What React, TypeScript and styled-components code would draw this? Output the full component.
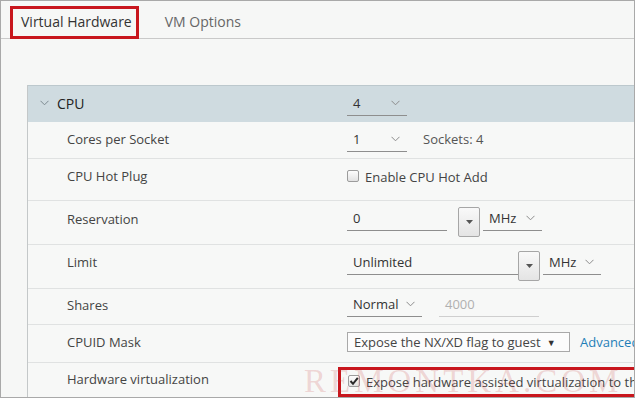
import React from 'react';
import styled, { createGlobalStyle } from 'styled-components';

const GlobalStyle = createGlobalStyle`
  body {
    margin: 0;
    font-family: 'Open Sans', 'Liberation Sans', sans-serif;
    background: #ffffff;
  }
`;

const Frame = styled.div`
  position: relative;
  box-sizing: border-box;
  width: 635px;
  height: 398px;
  overflow: hidden;
  border: 1px solid #a9a9a9;
  background: #f6f7f6;
`;

const TabBar = styled.div`
  display: flex;
  height: 37px;
  padding-left: 20px;
  border-bottom: 1px solid #c9c9c9;
`;

const Tab = styled.div<{ $active?: boolean; $marked?: boolean }>`
  position: relative;
  display: flex;
  align-items: center;
  padding: 4px 0 0;
  margin-right: 33px;
  font-size: 14px;
  color: ${(p) => (p.$active ? '#333333' : '#666666')};
  box-shadow: ${(p) => (p.$active ? 'inset 0 -2px 0 #2f5f9e' : 'none')};

  ${(p) =>
    p.$marked &&
    `
    &::after {
      content: '';
      position: absolute;
      left: -11px;
      right: -7px;
      top: 5px;
      bottom: -1px;
      border: 3px solid #c8161d;
    }
  `}
`;

const Panel = styled.div`
  margin: 46px 0 0 26px;
  width: 700px;
  border-left: 1px solid #c4c8c9;
`;

const Row = styled.div<{ $h: number; $header?: boolean }>`
  display: grid;
  grid-template-columns: 319px 1fr;
  box-sizing: border-box;
  height: ${(p) => p.$h}px;
  background: ${(p) => (p.$header ? '#cfdbe0' : '#f7f8f7')};
  border-top: ${(p) => (p.$header ? '1px solid #bcc8cd' : 'none')};
  border-bottom: ${(p) => (p.$header ? 'none' : '1px solid #e0e2e2')};
`;

const Label = styled.div<{ $pt: number; $header?: boolean }>`
  display: flex;
  align-items: center;
  gap: 8px;
  padding: ${(p) => p.$pt}px 0 0 ${(p) => (p.$header ? 12 : 39)}px;
  height: 16px;
  font-size: ${(p) => (p.$header ? 14 : 13)}px;
  color: ${(p) => (p.$header ? '#222222' : '#444444')};
`;

const Value = styled.div<{ $pt: number }>`
  display: flex;
  align-items: flex-start;
  padding-top: ${(p) => p.$pt}px;
  font-size: 13px;
  color: #333333;
`;

const SelectBox = styled.div<{ $w: number; $ml?: number }>`
  display: flex;
  align-items: center;
  justify-content: space-between;
  box-sizing: border-box;
  width: ${(p) => p.$w}px;
  height: 25px;
  margin-left: ${(p) => p.$ml ?? 0}px;
  padding: 0 7px 0 6px;
  border-bottom: 1px solid #8e8e8e;
`;

const TextInput = styled.div<{ $w: number; $ml?: number; $disabled?: boolean }>`
  display: flex;
  align-items: center;
  box-sizing: border-box;
  width: ${(p) => p.$w}px;
  height: 25px;
  margin-left: ${(p) => p.$ml ?? 0}px;
  padding-left: 6px;
  color: ${(p) => (p.$disabled ? '#b0b0b0' : '#333333')};
  border-bottom: 1px solid ${(p) => (p.$disabled ? '#cfcfcf' : '#8e8e8e')};
`;

const SpinButton = styled.div<{ $ml?: number }>`
  display: flex;
  align-items: center;
  justify-content: center;
  box-sizing: border-box;
  width: 22px;
  height: 30px;
  margin-left: ${(p) => p.$ml ?? 0}px;
  margin-top: 1px;
  border: 1px solid #a6a6a6;
  border-radius: 2px;
  background: linear-gradient(#f9f9f9, #e4e4e4);
`;

const Note = styled.span`
  margin-left: 16px;
  line-height: 25px;
  color: #555555;
`;

const CheckLine = styled.label`
  display: flex;
  align-items: center;
  gap: 6px;
  height: 16px;
  color: #444444;
`;

const Check = styled.span`
  display: flex;
  align-items: center;
  justify-content: center;
  box-sizing: border-box;
  width: 12px;
  height: 12px;
  margin-top: -2px;
  border: 1px solid #9c9c9c;
  border-radius: 2px;
  background: linear-gradient(#fdfdfd, #e2e2e2);
`;

const NativeSelect = styled.div`
  display: flex;
  align-items: center;
  gap: 6px;
  box-sizing: border-box;
  width: 223px;
  height: 20px;
  padding: 0 6px;
  border: 1px solid #a9a9a9;
  background: #fcfcfc;
  color: #444444;
`;

const SmallArrow = styled.span`
  font-size: 9px;
  color: #333333;
`;

const Link = styled.span`
  margin-left: 10px;
  line-height: 20px;
  color: #1f7fb8;
  white-space: nowrap;
`;

const Marked = styled.div`
  display: flex;
  align-items: center;
  box-sizing: border-box;
  height: 30px;
  margin-left: -9px;
  padding-left: 7px;
  width: 320px;
  border: 3px solid #c8161d;
  white-space: nowrap;
`;

const Watermark = styled.div`
  position: absolute;
  left: 303px;
  top: 362px;
  font-family: 'Liberation Serif', 'DejaVu Serif', serif;
  font-size: 33px;
  letter-spacing: 4px;
  color: rgba(200, 70, 70, 0.2);
  pointer-events: none;
  white-space: nowrap;
`;

const Chevron = ({ color = '#8c8c8c' }: { color?: string }) => (
  <svg width="9" height="6" viewBox="0 0 9 6">
    <polyline points="0.5,0.8 4.5,4.8 8.5,0.8" fill="none" stroke={color} strokeWidth="1" />
  </svg>
);

const Caret = () => (
  <svg width="7" height="4" viewBox="0 0 7 4">
    <polygon points="0,0 7,0 3.5,4" fill="#555555" />
  </svg>
);

const Tick = () => (
  <svg width="10" height="10" viewBox="0 0 10 10">
    <polyline points="1.5,5 4,7.8 8.8,1.8" fill="none" stroke="#2a2a2a" strokeWidth="2" />
  </svg>
);

const Select = ({ value, w, ml }: { value: string; w: number; ml?: number }) => (
  <SelectBox $w={w} $ml={ml}>
    <span>{value}</span>
    <Chevron />
  </SelectBox>
);

export default function App() {
  return (
    <>
      <GlobalStyle />
      <Frame>
        <TabBar>
          <Tab $active $marked>Virtual Hardware</Tab>
          <Tab>VM Options</Tab>
        </TabBar>

        <Panel>
          <Row $h={37} $header>
            <Label $pt={9} $header>
              <Chevron color="#7d8a90" />
              CPU
            </Label>
            <Value $pt={5}>
              <Select value="4" w={60} />
            </Value>
          </Row>

          <Row $h={37}>
            <Label $pt={9}>Cores per Socket</Label>
            <Value $pt={5}>
              <Select value="1" w={60} />
              <Note>Sockets: 4</Note>
            </Value>
          </Row>

          <Row $h={42}>
            <Label $pt={9}>CPU Hot Plug</Label>
            <Value $pt={10}>
              <CheckLine>
                <Check />
                Enable CPU Hot Add
              </CheckLine>
            </Value>
          </Row>

          <Row $h={44}>
            <Label $pt={10}>Reservation</Label>
            <Value $pt={5}>
              <TextInput $w={100}>0</TextInput>
              <SpinButton $ml={11}>
                <Caret />
              </SpinButton>
              <Select value="MHz" w={59} ml={3} />
            </Value>
          </Row>

          <Row $h={44}>
            <Label $pt={9}>Limit</Label>
            <Value $pt={5}>
              <TextInput $w={171}>Unlimited</TextInput>
              <SpinButton>
                <Caret />
              </SpinButton>
              <Select value="MHz" w={58} ml={3} />
            </Value>
          </Row>

          <Row $h={36}>
            <Label $pt={8}>Shares</Label>
            <Value $pt={3}>
              <Select value="Normal" w={75} />
              <TextInput $w={100} $ml={17} $disabled>
                4000
              </TextInput>
            </Value>
          </Row>

          <Row $h={38}>
            <Label $pt={9}>CPUID Mask</Label>
            <Value $pt={7}>
              <NativeSelect>
                Expose the NX/XD flag to guest
                <SmallArrow>▼</SmallArrow>
              </NativeSelect>
              <Link>Advanced</Link>
            </Value>
          </Row>

          <Row $h={40}>
            <Label $pt={8}>Hardware virtualization</Label>
            <Value $pt={4}>
              <Marked>
                <CheckLine>
                  <Check>
                    <Tick />
                  </Check>
                  Expose hardware assisted virtualization to the guest OS
                </CheckLine>
              </Marked>
            </Value>
          </Row>
        </Panel>

        <Watermark>REMONTKA.COM</Watermark>
      </Frame>
    </>
  );
}
